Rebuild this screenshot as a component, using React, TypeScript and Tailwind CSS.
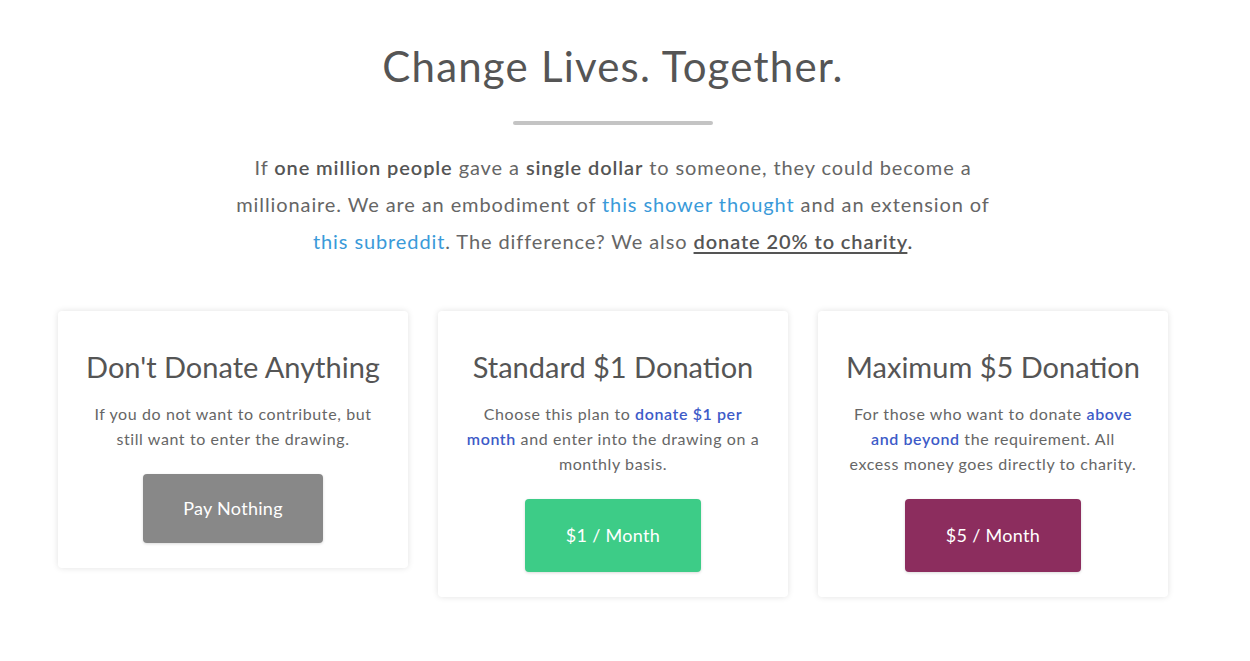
import React from 'react';

const font = { fontFamily: 'Lato, "Noto Sans", sans-serif' };

type Plan = {
  title: string;
  body: React.ReactNode;
  label: string;
  btn: string;
};

const plans: Plan[] = [
  {
    title: "Don't Donate Anything",
    body: (
      <>
        If you do not want to contribute, but
        <br />
        still want to enter the drawing.
      </>
    ),
    label: 'Pay Nothing',
    btn: 'bg-[#888888] w-[180px] h-[69px]',
  },
  {
    title: 'Standard $1 Donation',
    body: (
      <>
        Choose this plan to <a className="font-semibold text-[#3d5bc8]">donate $1 per</a>
        <br />
        <a className="font-semibold text-[#3d5bc8]">month</a> and enter into the drawing on a
        <br />
        monthly basis.
      </>
    ),
    label: '$1 / Month',
    btn: 'bg-[#3dcc87] w-[176px] h-[73px]',
  },
  {
    title: 'Maximum $5 Donation',
    body: (
      <>
        For those who want to donate <a className="font-semibold text-[#3d5bc8]">above</a>
        <br />
        <a className="font-semibold text-[#3d5bc8]">and beyond</a> the requirement. All
        <br />
        excess money goes directly to charity.
      </>
    ),
    label: '$5 / Month',
    btn: 'bg-[#8c2d5e] w-[176px] h-[73px]',
  },
];

export default function App() {
  return (
    <div className="min-h-[661px] bg-white pr-[24px] text-[#555]" style={font}>
      <div className="flex flex-col items-center pt-[40px]">
        <h1 className="text-[42px] leading-[52px] font-normal tracking-[1.2px] text-[#555]">
          Change Lives. Together.
        </h1>
        <div className="mt-[29px] h-[4px] w-[200px] rounded-full bg-[#c4c4c4]" />
        <p className="mt-[24px] whitespace-nowrap text-center text-[20px] leading-[37px] tracking-[0.9px] text-[#666]">
          If <b className="font-semibold text-[#555]">one million people</b> gave a{' '}
          <b className="font-semibold text-[#555]">single dollar</b> to someone, they could become a
          <br />
          millionaire. We are an embodiment of <a className="text-[#3a9ad9]">this shower thought</a> and an
          extension of
          <br />
          <a className="text-[#3a9ad9]">this subreddit</a>. The difference? We also{' '}
          <a className="font-semibold text-[#555] underline underline-offset-[3px]">donate 20% to charity</a>
          <b className="font-semibold text-[#555]">.</b>
        </p>
      </div>

      <div className="mt-[51px] flex items-start justify-center gap-[30px]">
        {plans.map((p) => (
          <div
            key={p.title}
            className="flex w-[350px] flex-col items-center rounded-[4px] bg-white px-[16px] pt-[36px] pb-[25px] shadow-[0_0_6px_rgba(0,0,0,0.12)]"
          >
            <h2 className="text-[29px] leading-[40px] font-normal text-[#555]">{p.title}</h2>
            <p className="mt-[14px] whitespace-nowrap text-center text-[16px] leading-[25px] tracking-[0.6px] text-[#666]">
              {p.body}
            </p>
            <button
              className={`${p.btn} mt-[23px] rounded-[4px] text-[18px] tracking-[0.3px] text-white shadow-[0_1px_3px_rgba(0,0,0,0.15)]`}
            >
              {p.label}
            </button>
          </div>
        ))}
      </div>
    </div>
  );
}
